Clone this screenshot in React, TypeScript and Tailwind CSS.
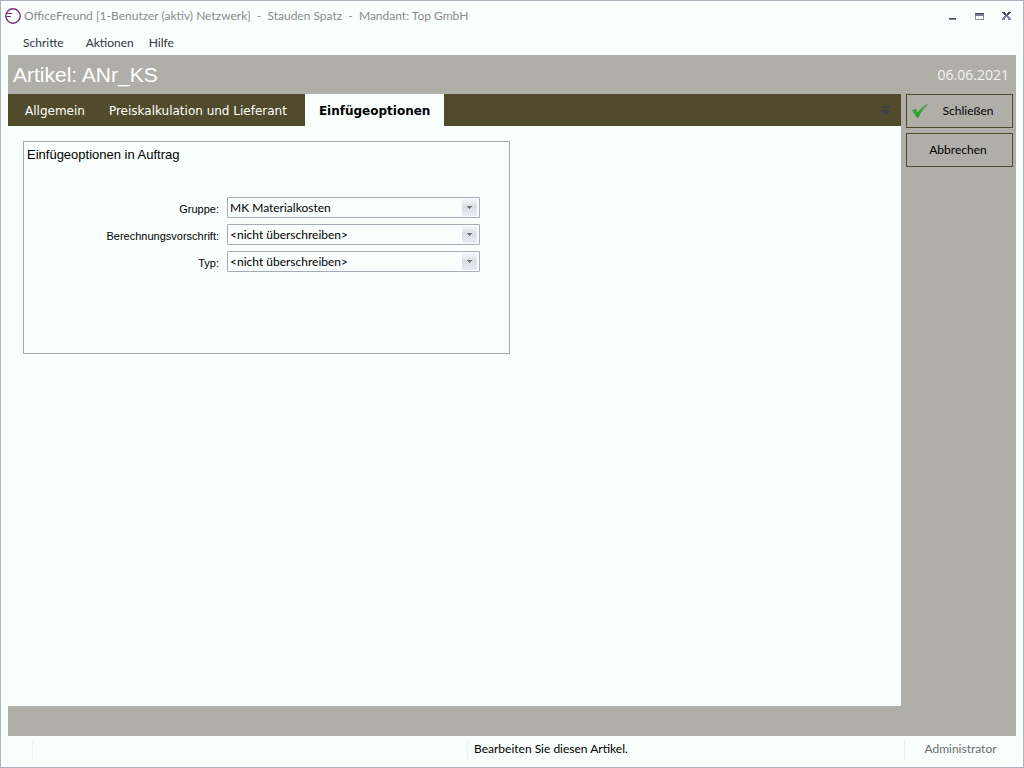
import { useState } from "react";

const menuItems = ["Schritte", "Aktionen", "Hilfe"];
const tabs = ["Allgemein", "Preiskalkulation und Lieferant", "Einfügeoptionen"];

const fields = [
	{ id: "gruppe", label: "Gruppe:", options: ["MK Materialkosten"] },
	{ id: "vorschrift", label: "Berechnungsvorschrift:", options: ["<nicht überschreiben>"] },
	{ id: "typ", label: "Typ:", options: ["<nicht überschreiben>"] },
];

function Logo() {
	return (
		<svg className="size-4 shrink-0" viewBox="0 0 16 16" fill="none" stroke="#7d3173">
			<circle cx="8" cy="8" r="7.2" strokeWidth="1.4" />
			<path d="M1 8.500h5M2 5.500h5" strokeWidth="1" />
		</svg>
	);
}

function WindowButtons() {
	return (
		<div className="flex items-center gap-[15px] pr-1">
			<button type="button" aria-label="Minimieren">
				<svg className="w-3 h-3" viewBox="0 0 12 12" shapeRendering="crispEdges">
					<path d="M3 8h7v1H3z" fill="#3f4657" />
					<path d="M3 9h7v1H3z" fill="#8791ab" />
				</svg>
			</button>
			<button type="button" aria-label="Maximieren">
				<svg className="w-3 h-3" viewBox="0 0 12 12" shapeRendering="crispEdges">
					<path d="M2 3h9v1H2z" fill="#3f4657" />
					<path d="M2 4h9v2H2z" fill="#737c94" />
					<path d="M2 6h1v3h7V6h1v4H2z" fill="#8791ab" />
				</svg>
			</button>
			<button type="button" aria-label="Fenster schließen">
				<svg className="w-3 h-3" viewBox="0 0 12 12" shapeRendering="crispEdges">
					<path d="M2 2h3v1H2zM8 2h3v1H8zM3 3h3v1H3zM7 3h3v1H7z" fill="#3f4657" />
					<path d="M4 4h5v1H4zM5 5h3v1H5z" fill="#596177" />
					<path d="M4 6h5v1H4zM3 7h3v1H3zM7 7h3v1H7zM2 8h3v1H2zM8 8h3v1H8zM2 9h3v1H2zM8 9h3v1H8z" fill="#7d87a2" />
				</svg>
			</button>
		</div>
	);
}

function CheckIcon() {
	return (
		<svg className="size-4" viewBox="0 0 16 16">
			<defs>
				<linearGradient id="check" x1="0" y1="0" x2="0" y2="1">
					<stop offset="0" stopColor="#4cb648" />
					<stop offset="1" stopColor="#17a31a" />
				</linearGradient>
			</defs>
			<path d="M.7 7.3 3.4 6l2.500 4C8 6 11.500 3.300 15.500 1.500 11.500 5 8.500 9 6.300 14.300H5z" fill="url(#check)" stroke="#2b8a2b" strokeWidth=".6" />
		</svg>
	);
}

function SelectField({ id, label, options }: { id: string; label: string; options: string[] }) {
	return (
		<>
			<label htmlFor={id} className="pt-1 text-right font-['Liberation_Sans',sans-serif] text-[11px] leading-4 text-black">
				{label}
			</label>
			<div className="relative">
				<select
					id={id}
					className="block h-[21px] w-full appearance-none rounded-[1px] border border-[#a5acb5] bg-[#f8fffd] pl-[2px] pr-5 text-[12px] leading-4 text-black"
				>
					{options.map((option) => (
						<option key={option}>{option}</option>
					))}
				</select>
				<span className="pointer-events-none absolute top-[2px] right-[3px] flex h-[17px] w-[15px] items-center justify-center bg-linear-to-b from-[#f4f6fa] via-[#d9dce6] to-[#ebeaf6]">
					<svg className="w-[5px] h-[3px]" viewBox="0 0 5 3" shapeRendering="crispEdges">
						<path d="M0 0h5v1H0zM1 1h3v1H1zM2 2h1v1H2z" fill="#75756c" />
					</svg>
				</span>
			</div>
		</>
	);
}

export default function App() {
	const [active, setActive] = useState(2);

	return (
		<div className="flex h-screen flex-col border border-[#b0b3bd] bg-[#f8fffd] px-[7px] font-['Lato','Open_Sans',sans-serif] text-[12px] leading-4">
			<header className="-ml-[3px] flex h-[30px] items-center justify-between">
				<div className="flex items-center gap-[3px] text-[#8b8b8b]">
					<Logo />
					<h1 className="whitespace-pre">OfficeFreund [1-Benutzer (aktiv) Netzwerk]  -  Stauden Spatz  -  Mandant: Top GmbH</h1>
				</div>
				<WindowButtons />
			</header>
			<nav className="flex h-6 items-center gap-[15px] pl-[15px] text-[#33333d]">
				{menuItems.map((item) => (
					<button type="button" key={item} className="first:mr-[7px]">{item}</button>
				))}
			</nav>

			<div className="flex h-[39px] shrink-0 items-center justify-between bg-[#b0afa7] pl-[5px] pr-[7px] text-white">
				<h2 className="font-['Liberation_Sans',sans-serif] text-[21px] leading-6">Artikel: ANr_KS</h2>
				<span className="font-['Open_Sans',sans-serif] text-[14px] text-[#f3f3f1]">06.06.2021</span>
			</div>

			<div className="flex min-h-0 flex-1 bg-[#b0afa7]">
				<main className="flex flex-1 flex-col bg-[#f8fffd]">
					<div role="tablist" className="flex h-8 items-stretch bg-[#524b2b] pl-[5px] font-['DejaVu_Sans',sans-serif] text-[12px]">
						{tabs.map((tab, i) => (
							<button
								type="button"
								role="tab"
								key={tab}
								aria-selected={i === active}
								onClick={() => setActive(i)}
								className={i === active ? "ml-[6px] bg-[#f8fffd] px-[14px] pt-px font-bold text-black" : "px-3 pt-px text-white"}
							>
								{tab}
							</button>
						))}
						<button type="button" aria-label="Weitere Register" className="mr-[11px] ml-auto">
							<svg className="w-[9px] h-[9px]" viewBox="0 0 9 9" shapeRendering="crispEdges">
								<path d="M0 0h9v2H0zM0 4h9v1H0zM1 5h7v1H1zM2 6h5v1H2zM3 7h3v1H3zM4 8h1v1H4z" fill="#3b424c" />
							</svg>
						</button>
					</div>
					<section className="mt-[15px] ml-[15px] h-[213px] w-[487px] border border-[#a5a8a8] pt-1 pr-[29px] pl-[3px]">
						<h3 className="font-['Liberation_Sans',sans-serif] text-[13px] leading-[18px] text-black">Einfügeoptionen in Auftrag</h3>
						<div className="mt-[33px] grid grid-cols-[192px_1fr] gap-x-2 gap-y-[6px]">
							{fields.map((field) => (
								<SelectField key={field.id} {...field} />
							))}
						</div>
					</section>
				</main>
				<aside className="flex w-[115px] flex-col gap-[5px] pr-[3px] pl-[5px] text-black">
					<button type="button" className="flex h-[34px] items-center border border-[#524b2b] pl-[5px]">
						<CheckIcon />
						<span className="flex-1 pl-[10px] pr-[14px]">Schließen</span>
					</button>
					<button type="button" className="h-[34px] border border-[#524b2b] pr-[3px]">Abbrechen</button>
				</aside>
			</div>
			<div className="h-[30px] shrink-0 bg-[#b0afa7]" />

			<footer className="flex h-[31px] shrink-0 items-start pt-1">
				<span className="h-5 w-[25px] border-r border-[#f3f3f3]" />
				<span className="h-5 flex-1 border-r border-[#f0f3f2]" />
				<span className="h-5 w-[437px] border-r border-[#e9eeec] pl-[6px] leading-[18px] text-black">Bearbeiten Sie diesen Artikel.</span>
				<span className="h-5 w-[111px] text-center leading-[18px] text-[#6b6b6b]">Administrator</span>
			</footer>
		</div>
	);
}
